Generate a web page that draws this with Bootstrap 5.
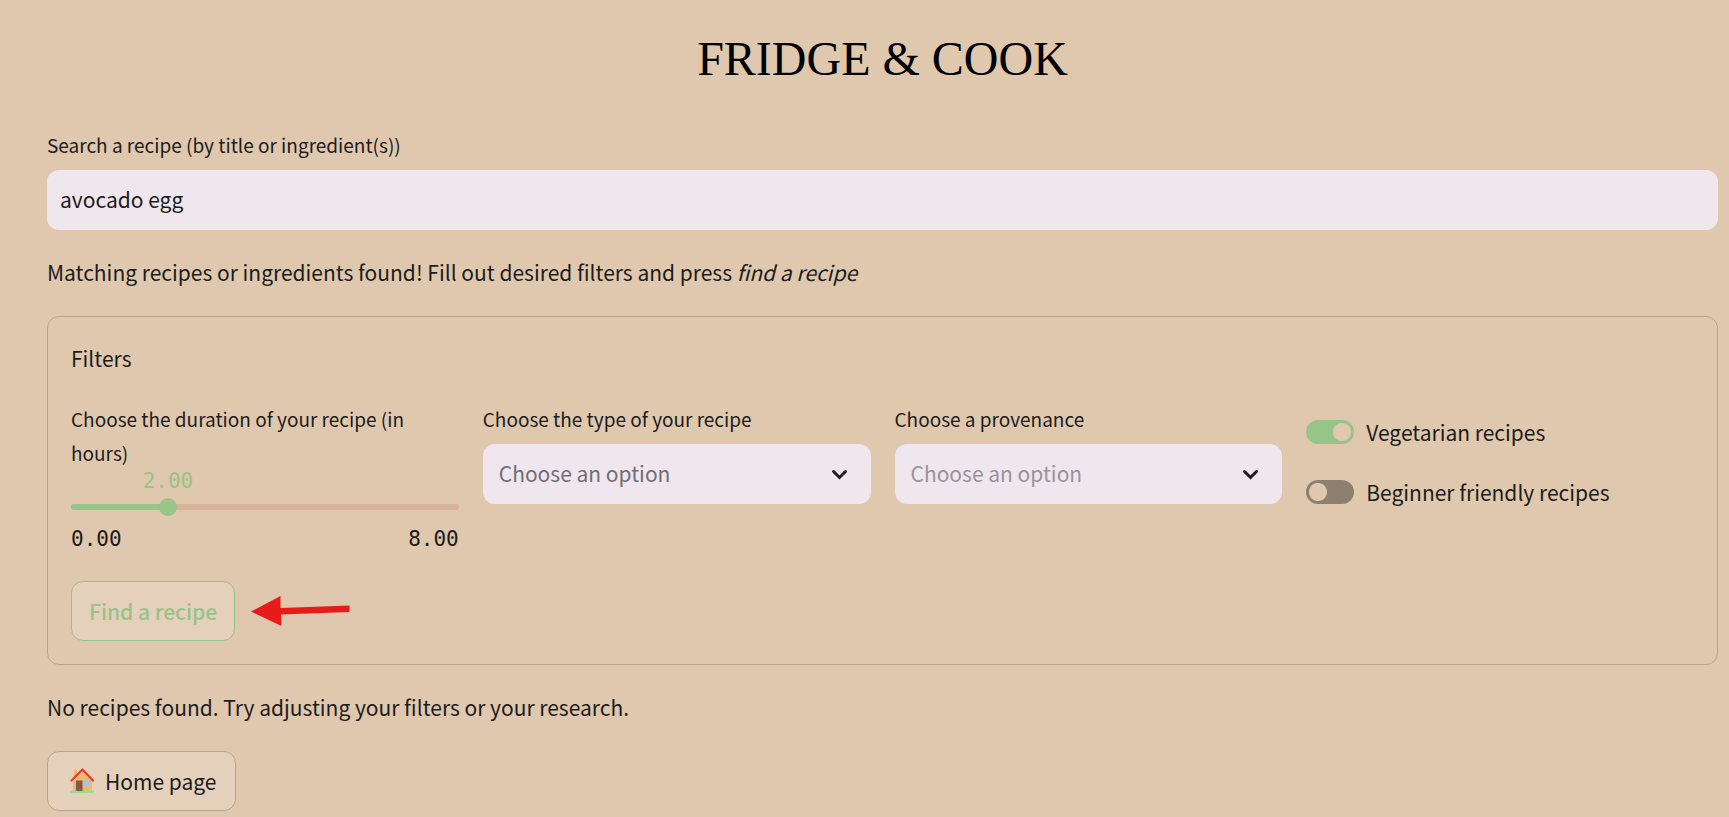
<!DOCTYPE html>
<html lang="en">
<head>
<meta charset="utf-8">
<meta name="viewport" content="width=device-width, initial-scale=1">
<title>Fridge &amp; Cook</title>
<link href="https://cdn.jsdelivr.net/npm/bootstrap@5.3.0/dist/css/bootstrap.min.css" rel="stylesheet">
<style>
  :root { --sand: #e0c8ae; --ink: #1c1c1c; --leaf: #97c487; --lilac: #f0e6ed; --line: #b9a38e; --gap: 26px; }
  body { background: var(--sand); color: var(--ink); font-family: "Noto Sans CJK SC", "Noto Sans", sans-serif; font-size: 21px; line-height: 36px; }
  main { padding: 23px 11px 5px 47px; }
  h1 { font-family: "Liberation Serif", serif; font-size: 48px; line-height: 72px; color: #000; margin-bottom: 33px; }
  .note { margin-bottom: var(--gap); }
  .field-label { display: block; font-size: 19px; line-height: 34px; margin: 0; }
  .field { height: 60px; border: 0; border-radius: 12px; font-size: 21px; line-height: 36px; color: var(--ink); background-color: var(--lilac); padding: 6px 13px 8px; }
  .field:focus { background-color: var(--lilac); color: var(--ink); }
  .form-select.field { padding-left: 16px; color: #716e74; background-size: 17px 11px; background-position: right 23px center;
    background-image: url("data:image/svg+xml,%3Csvg xmlns='http://www.w3.org/2000/svg' viewBox='0 0 17 11'%3E%3Cpath d='M2.5 2.5l6 6 6-6' fill='none' stroke='%231c1c1c' stroke-width='3' stroke-linecap='round'/%3E%3C/svg%3E"); }
  .form-select.field.muted { color: #98949a; }
  .panel { border: 1px solid var(--line); border-radius: 12px; padding: 23px; margin-bottom: 24px; }
  .mono { font-family: "DejaVu Sans Mono", monospace; font-size: 21px; line-height: 36px; }
  .marker { width: 50%; color: var(--leaf); line-height: 23px; text-align: center; }
  .slider { padding: 11px 0; }
  .rail { height: 6px; border-radius: 3px; background: #d8b399; }
  .rail .progress-bar { background: var(--leaf); }
  .knob { appearance: none; position: absolute; top: 5px; left: -9px; width: calc(100% + 18px); height: 18px; margin: 0; background: transparent; }
  .knob::-webkit-slider-thumb { appearance: none; width: 18px; height: 18px; border-radius: 50%; background: var(--leaf); }
  .knob::-moz-range-thumb { width: 18px; height: 18px; border: 0; border-radius: 50%; background: var(--leaf); }
  .switches { padding-top: 12px; }
  .toggle { appearance: none; flex: none; width: 48px; height: 24px; border-radius: 12px; margin: 0;
    background: radial-gradient(circle at 12px 12px, var(--sand) 8.5px, transparent 9.5px) #8e8070; }
  .toggle:checked { background: radial-gradient(circle at 36px 12px, var(--sand) 8.5px, transparent 9.5px) var(--leaf); }
  .soft-btn { height: 60px; padding: 0 17px; border: 1px solid var(--line); border-radius: 12px; background: #e5d0bb; color: var(--ink); font-size: 21px; line-height: 36px; }
  .soft-btn.find { border-color: var(--leaf); color: var(--leaf); font-weight: 500; }
  .soft-btn.home { padding: 0 19px; }
</style>
</head>
<body>
<main>
  <h1 class="text-center fw-normal">FRIDGE &amp; COOK</h1>

  <label class="field-label mb-2" for="search">Search a recipe (by title or ingredient(s))</label>
  <input class="form-control field" id="search" type="text" value="avocado egg">

  <p class="note mt-4">Matching recipes or ingredients found! Fill out desired filters and press <em>find a recipe</em></p>

  <form class="panel">
    <p class="note">Filters</p>
    <div class="row row-cols-1 row-cols-sm-2 row-cols-lg-4 gy-0">
      <div class="col">
        <label class="field-label" for="duration">Choose the duration of your recipe (in hours)</label>
        <div class="mono marker">2.00</div>
        <div class="slider position-relative">
          <div class="progress rail"><div class="progress-bar" style="width:25%"></div></div>
          <input class="knob" id="duration" type="range" min="0" max="8" step="0.25" value="2">
        </div>
        <div class="mono d-flex justify-content-between"><span>0.00</span><span>8.00</span></div>
      </div>
      <div class="col">
        <label class="field-label mb-2" for="kind">Choose the type of your recipe</label>
        <select class="form-select field" id="kind"><option>Choose an option</option></select>
      </div>
      <div class="col">
        <label class="field-label mb-2" for="origin">Choose a provenance</label>
        <select class="form-select field muted" id="origin"><option>Choose an option</option></select>
      </div>
      <div class="col switches d-flex flex-column gap-4">
        <div class="d-flex align-items-center">
          <input class="toggle" type="checkbox" role="switch" id="veg" checked>
          <label class="ps-2 ms-1" for="veg">Vegetarian recipes</label>
        </div>
        <div class="d-flex align-items-center">
          <input class="toggle" type="checkbox" role="switch" id="easy">
          <label class="ps-2 ms-1" for="easy">Beginner friendly recipes</label>
        </div>
      </div>
    </div>
    <div class="d-flex align-items-center mt-4">
      <button class="btn soft-btn find" type="button">Find a recipe</button>
      <svg class="ms-3" width="99" height="30" viewBox="0 0 99 30" aria-hidden="true"><path fill="#e81b1b" d="M0 15.500 29.500 0v12L98.500 9.500v6.500L30 18.500 30.500 30z"/></svg>
    </div>
  </form>

  <p class="note">No recipes found. Try adjusting your filters or your research.</p>

  <button class="btn soft-btn home d-inline-flex align-items-center" type="button">
    <svg class="me-2" width="30" height="30" viewBox="0 0 30 30" aria-hidden="true">
      <path fill="#e8bb72" d="M7 4h3v7H7zM6 14l9.500-9L25 14v12H6z"/>
      <path fill="none" stroke="#e53b35" stroke-width="2.200" stroke-linecap="round" stroke-linejoin="round" d="M4.500 14.500 15.500 3.500 26 14.500"/>
      <path fill="#855847" d="M9 14.500h6.500V25H9z"/><circle cx="14" cy="20" r=".6" fill="#4f342b"/>
      <path fill="#9dc8f5" d="M17 14.500h5.500v5H17z"/>
      <rect x="3.500" y="25" width="23" height="2" rx="1" fill="#8ae491"/>
    </svg>Home page</button>
</main>
<script src="https://cdn.jsdelivr.net/npm/bootstrap@5.3.0/dist/js/bootstrap.bundle.min.js"></script>
</body>
</html>
